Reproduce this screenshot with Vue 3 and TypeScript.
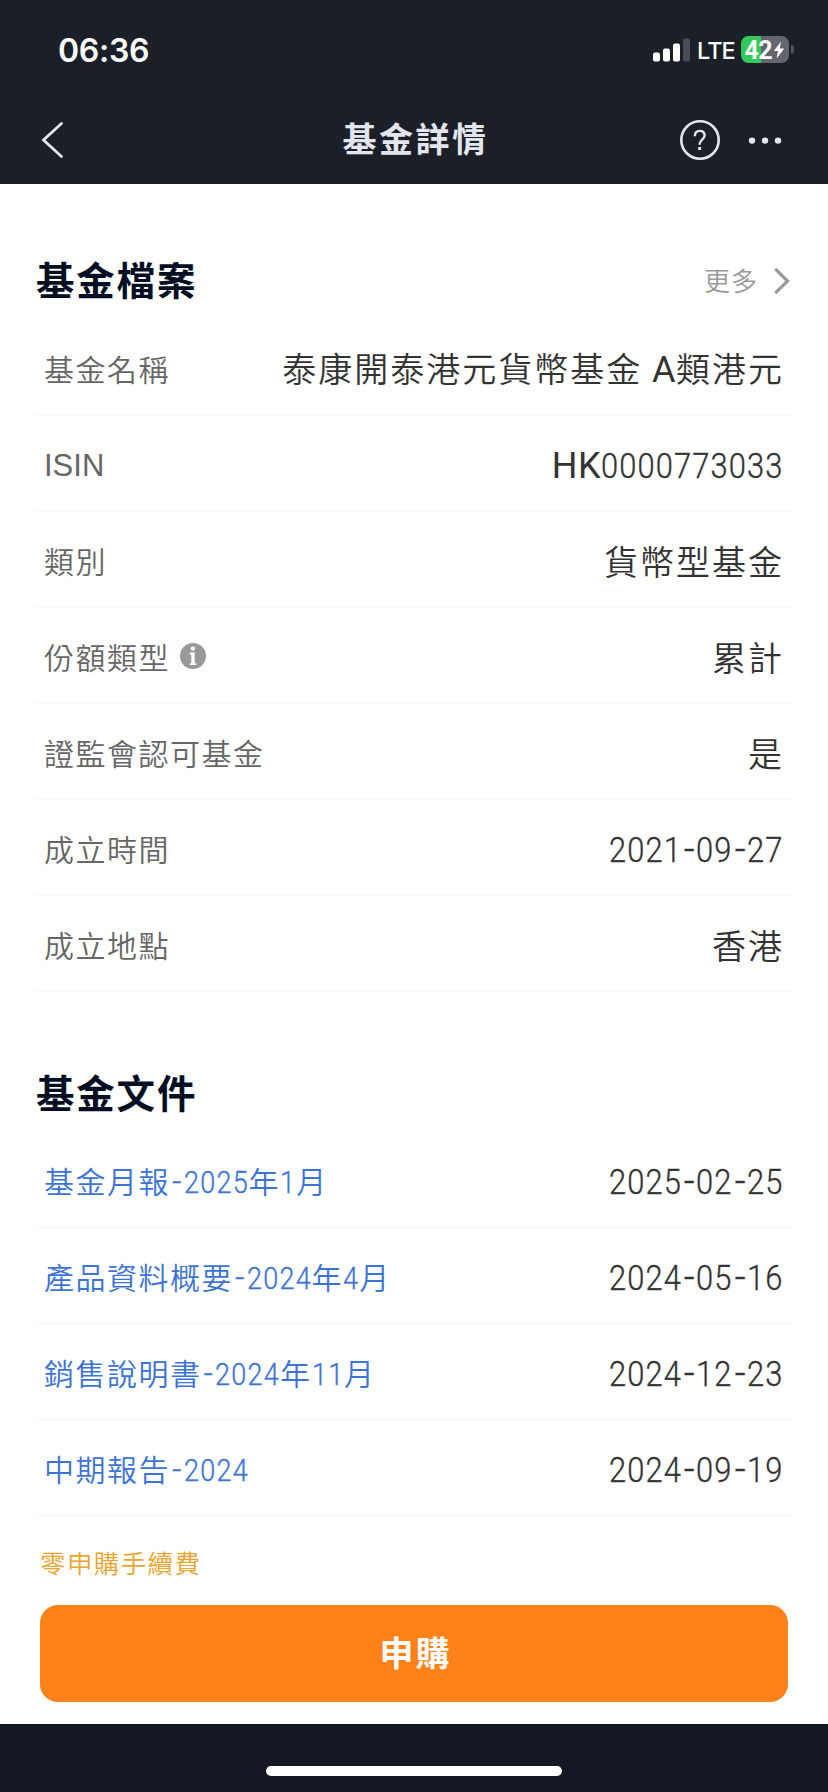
<script setup lang="ts">
type RunKind = 'cjk' | 'num' | 'dash' | 'latin'

interface Run {
  kind: RunKind
  text: string
}

interface InfoRow {
  label: string
  value: string
  info?: boolean
}

const profile: InfoRow[] = [
  { label: '基金名稱', value: '泰康開泰港元貨幣基金 A類港元' },
  { label: 'ISIN', value: 'HK0000773033' },
  { label: '類別', value: '貨幣型基金' },
  { label: '份額類型', value: '累計', info: true },
  { label: '證監會認可基金', value: '是' },
  { label: '成立時間', value: '2021-09-27' },
  { label: '成立地點', value: '香港' },
]

const documents: InfoRow[] = [
  { label: '基金月報-2025年1月', value: '2025-02-25' },
  { label: '產品資料概要-2024年4月', value: '2024-05-16' },
  { label: '銷售說明書-2024年11月', value: '2024-12-23' },
  { label: '中期報告-2024', value: '2024-09-19' },
]

// Splits mixed text so figures, dashes and Latin letters get their own face.
function runs(text: string): Run[] {
  const parts = text.match(/[0-9]+|-|[A-Za-z]+|[^0-9A-Za-z-]+/g) ?? []
  return parts.map((part) => {
    let kind: RunKind = 'cjk'
    if (/^[0-9]/.test(part)) kind = 'num'
    else if (part === '-') kind = 'dash'
    else if (/^[A-Za-z]/.test(part)) kind = 'latin'
    return { kind, text: part }
  })
}

// Condensed figures give back the width they lose, one share per character.
const count = (run: Run) => ({ '--n': run.text.length })
</script>

<template>
  <div class="screen">
    <header class="top">
      <div class="status">
        <span class="time">06:36</span>
        <div class="status-right">
          <svg class="signal" width="38" height="24" viewBox="0 0 38 24">
            <rect x="0" y="14.5" width="7" height="9" rx="2" fill="#fff" />
            <rect x="10" y="10.5" width="7" height="13" rx="2" fill="#fff" />
            <rect x="20" y="5.5" width="7" height="18" rx="2" fill="#fff" />
            <rect x="30" y="0.5" width="7" height="23" rx="2" fill="#484c56" />
          </svg>
          <span class="lte">LTE</span>
          <div class="battery">
            <span class="level">42</span>
            <svg width="12" height="18" viewBox="0 0 12 18">
              <path d="M8 0.5 0.8 10H5L3.6 17.5 11.2 7.6H6.8Z" fill="#fff" />
            </svg>
          </div>
          <span class="battery-cap"></span>
        </div>
      </div>
      <nav class="nav">
        <svg class="back" width="24" height="40" viewBox="0 0 24 40">
          <path d="M21.5 3.5 3.5 20 21.5 36.5" fill="none" stroke="#e3e6ef" stroke-width="2.8" stroke-linecap="round" />
        </svg>
        <h1 class="page-title">基金詳情</h1>
        <div class="nav-actions">
          <svg width="40" height="40" viewBox="0 0 40 40" fill="none" stroke="#e3e6ef">
            <circle cx="20" cy="20" r="18.7" stroke-width="2.6" />
            <path d="M14.8 16.2C14.8 12.6 16.8 10.9 19.7 10.9S24.6 12.7 24.6 15.6C24.6 19.3 19.7 19.9 19.7 23.8V24.8" stroke-width="2.4" />
            <rect x="18.7" y="27.5" width="2" height="2" stroke-width="1" fill="#e3e6ef" />
          </svg>
          <svg width="34" height="8" viewBox="0 0 34 8" fill="#e3e6ef">
            <circle cx="4" cy="4.6" r="3.2" />
            <circle cx="17" cy="4.6" r="3.2" />
            <circle cx="30" cy="4.6" r="3.2" />
          </svg>
        </div>
      </nav>
    </header>

    <main class="content">
      <section class="section profile">
        <div class="section-head">
          <h2>基金檔案</h2>
          <div class="more">
            <span>更多</span>
            <svg width="16" height="28" viewBox="0 0 16 28">
              <path d="M2.2 2.8 13.6 14 2.2 25.2" fill="none" stroke="#999" stroke-width="3.2" stroke-linecap="round" />
            </svg>
          </div>
        </div>
        <div v-for="row in profile" :key="row.label" class="row">
          <div class="label">
            <span v-for="(run, i) in runs(row.label)" :key="i" :class="run.kind" :style="count(run)">{{ run.text }}</span>
            <svg v-if="row.info" class="info" width="26" height="26" viewBox="0 0 26 26">
              <circle cx="13" cy="13" r="13" fill="#999" />
              <circle cx="12.9" cy="5.6" r="2.2" fill="#fff" />
              <path d="M9.8 9.6H14.7V20.2H16.3V22H9.8V20.2H11.3V11.4H9.8Z" fill="#fff" />
            </svg>
          </div>
          <div class="value">
            <span v-for="(run, i) in runs(row.value)" :key="i" :class="run.kind" :style="count(run)">{{ run.text }}</span>
          </div>
        </div>
      </section>

      <section class="section docs">
        <div class="section-head">
          <h2>基金文件</h2>
        </div>
        <div v-for="row in documents" :key="row.label" class="row">
          <a class="label link">
            <span v-for="(run, i) in runs(row.label)" :key="i" :class="run.kind" :style="count(run)">{{ run.text }}</span>
          </a>
          <div class="value">
            <span v-for="(run, i) in runs(row.value)" :key="i" :class="run.kind" :style="count(run)">{{ run.text }}</span>
          </div>
        </div>
      </section>

      <footer class="purchase">
        <p class="fee">零申購手續費</p>
        <button class="buy" type="button">申購</button>
      </footer>
    </main>

    <div class="home-bar"><span></span></div>
  </div>
</template>

<style>
body {
  margin: 0;
  background: #fff;
}
</style>

<style scoped>
.screen {
  width: 828px;
  height: 1792px;
  display: flex;
  flex-direction: column;
  overflow: hidden;
  background: #fff;
  font-family: "Liberation Sans", "Noto Sans CJK TC", sans-serif;
}

.top {
  height: 184px;
  flex: none;
  background: #1a1f28;
  color: #fff;
}

.status {
  height: 99px;
  box-sizing: border-box;
  padding: 0 34px 0 58px;
  display: flex;
  align-items: center;
  justify-content: space-between;
}

.time {
  padding-top: 2px;
  font: 600 32px/40px Inter, sans-serif;
  letter-spacing: -0.3px;
}

.status-right {
  display: flex;
  align-items: center;
}

.lte {
  width: 37px;
  margin-left: 6px;
  font: 500 23.5px/30px Inter, sans-serif;
  letter-spacing: -0.9px;
  padding-top: 2px;
}

.battery {
  width: 48px;
  height: 27px;
  margin-left: 7px;
  border-radius: 7.5px;
  display: flex;
  align-items: center;
  justify-content: center;
  background: linear-gradient(90deg, #34c759 0 20px, #63666d 20px);
}

.level {
  font: 700 25px/27px Roboto, sans-serif;
  letter-spacing: -0.7px;
  margin-right: 1.5px;
  padding-top: 1px;
}

.battery-cap {
  width: 3px;
  height: 9px;
  margin-left: 2px;
  border-radius: 0 4px 4px 0;
  background: #50545c;
}

.nav {
  height: 82px;
  display: grid;
  grid-template-columns: 1fr auto 1fr;
  align-items: center;
  padding: 0 46px 0 40px;
}

.page-title {
  margin: 0 0 4px 9px;
  font: 700 34px/50px "Noto Sans CJK TC", sans-serif;
  letter-spacing: 2.5px;
  color: #e3e6ef;
}

.nav-actions {
  display: flex;
  align-items: center;
  justify-content: flex-end;
  gap: 28px;
}

.content {
  flex: 1;
  padding: 0 36px;
  background: #fff;
}

.section-head {
  height: 136px;
  box-sizing: border-box;
  padding-top: 64px;
  display: flex;
  align-items: flex-start;
  justify-content: space-between;
}

h2 {
  margin: 0;
  font: 700 38.5px/60px "Noto Sans CJK TC", sans-serif;
  letter-spacing: 1.8px;
  color: #020e22;
}

.more {
  height: 62px;
  padding-top: 2px;
  display: flex;
  align-items: center;
  gap: 16px;
  padding-right: 2px;
  font: 350 26px/60px "Noto Sans CJK TC", sans-serif;
  letter-spacing: 1px;
  color: #999;
}

.more span {
  padding-bottom: 2px;
}

.row {
  height: 96px;
  box-sizing: border-box;
  padding: 4px 8px 0;
  border-bottom: 2px solid #f9f9f9;
  display: flex;
  align-items: center;
  justify-content: space-between;
  white-space: pre;
}

.label,
.value {
  display: flex;
  align-items: baseline;
  font-family: "Noto Sans CJK TC", sans-serif;
  font-weight: 350;
}

.label::before,
.value::before {
  content: "\200b";
  width: 0;
}

.label {
  font-size: 30px;
  line-height: 48px;
  letter-spacing: 1.5px;
  color: #666;
}

.profile .label {
  padding-bottom: 2px;
}

.value {
  font-size: 34px;
  line-height: 50px;
  letter-spacing: 2px;
  color: #333;
}

.link {
  color: #3d74d3;
}

.label .latin {
  font-family: "Liberation Sans", sans-serif;
  font-size: 31px;
  letter-spacing: 0;
}

.value .latin {
  font-family: Roboto, sans-serif;
  font-weight: 450;
  font-size: 36px;
  letter-spacing: 0.6px;
}

.num,
.dash {
  font-family: Roboto, sans-serif;
  font-weight: 300;
  -webkit-text-stroke: 0.35px currentColor;
}

.num {
  transform: scaleX(0.87);
  transform-origin: left center;
}

.label .num {
  font-size: 31px;
  letter-spacing: 1.5px;
  margin-right: calc(var(--n) * -2.43px);
}

.value .num {
  font-size: 35.5px;
  letter-spacing: 1.3px;
  margin-right: calc(var(--n) * -2.72px);
}

.dash {
  text-align: center;
  letter-spacing: 0;
}

.label .dash {
  width: 13.5px;
  font-size: 33px;
}

.value .dash {
  width: 14.5px;
  font-size: 38px;
}

.info {
  margin-left: 10px;
  align-self: center;
}

.docs {
  margin-top: 4px;
}

.docs .section-head {
  padding-top: 65px;
}

.purchase {
  padding: 0 4px;
}

.fee {
  margin: 0;
  padding: 26px 0 23px;
  font: 350 25.5px/40px "Noto Sans CJK TC", sans-serif;
  letter-spacing: 1.4px;
  color: #eaa52e;
}

.buy {
  display: block;
  width: 100%;
  height: 97px;
  padding: 0 0 4px 3px;
  border: 0;
  border-radius: 18px;
  background: #ff8119;
  color: #fff;
  font: 700 34px/93px "Noto Sans CJK TC", sans-serif;
  letter-spacing: 2px;
}

.home-bar {
  height: 68px;
  flex: none;
  display: flex;
  justify-content: center;
  background: #141822;
}

.home-bar span {
  width: 296px;
  height: 10px;
  margin-top: 42px;
  border-radius: 5px;
  background: #fff;
}
</style>
